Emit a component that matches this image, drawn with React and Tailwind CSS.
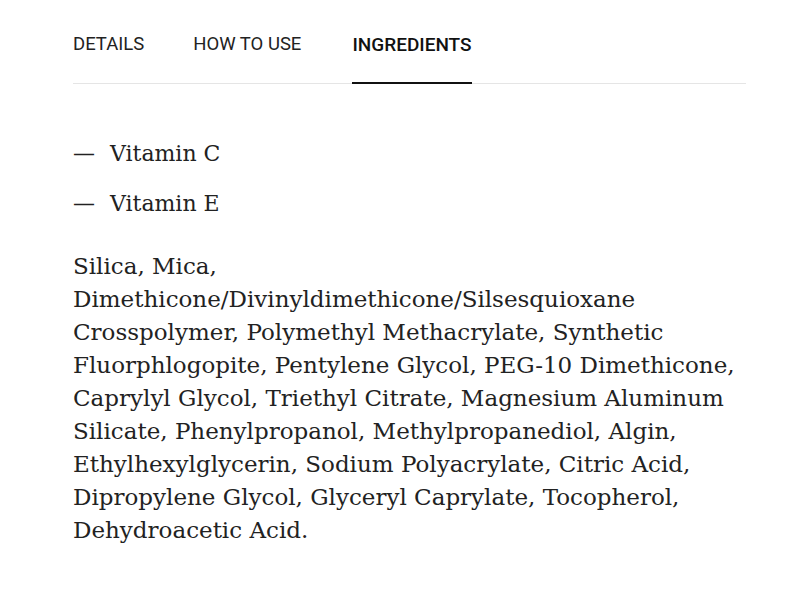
import React from "react";

const tabs = ["DETAILS", "HOW TO USE", "INGREDIENTS"];

const lines = [
  "Silica, Mica,",
  "Dimethicone/Divinyldimethicone/Silsesquioxane",
  "Crosspolymer, Polymethyl Methacrylate, Synthetic",
  "Fluorphlogopite, Pentylene Glycol, PEG-10 Dimethicone,",
  "Caprylyl Glycol, Triethyl Citrate, Magnesium Aluminum",
  "Silicate, Phenylpropanol, Methylpropanediol, Algin,",
  "Ethylhexylglycerin, Sodium Polyacrylate, Citric Acid,",
  "Dipropylene Glycol, Glyceryl Caprylate, Tocopherol,",
  "Dehydroacetic Acid.",
];

export default function App() {
  const active = "INGREDIENTS";
  return (
    <div className="min-h-screen bg-white px-[73px] pt-[31px]">
      <div className="w-[673px]">
        <div className="flex gap-[49px] border-b border-[#e5e5e5] font-['Roboto',sans-serif] text-[18.5px] text-[#222]">
          {tabs.map((t) => (
            <div
              key={t}
              className={
                t === active
                  ? "ml-[2px] pb-[22px] text-[19px] font-medium text-[#111] border-b-2 border-[#111] -mb-px"
                  : "pb-[23px]"
              }
            >
              {t}
            </div>
          ))}
        </div>

        <div className="font-['DejaVu_Serif',serif] text-[#222]">
          <ul className="mt-[55px] flex flex-col gap-[20px] text-[22px] leading-[30px]">
            <li className="flex">
              <span className="w-[37px]">—</span>Vitamin C
            </li>
            <li className="flex">
              <span className="w-[37px]">—</span>Vitamin E
            </li>
          </ul>
          <p className="mt-[31px] text-[23px] leading-[33px]">
            {lines.map((l, i) => (
              <span key={i} className="block whitespace-nowrap">
                {l}
              </span>
            ))}
          </p>
        </div>
      </div>
    </div>
  );
}
